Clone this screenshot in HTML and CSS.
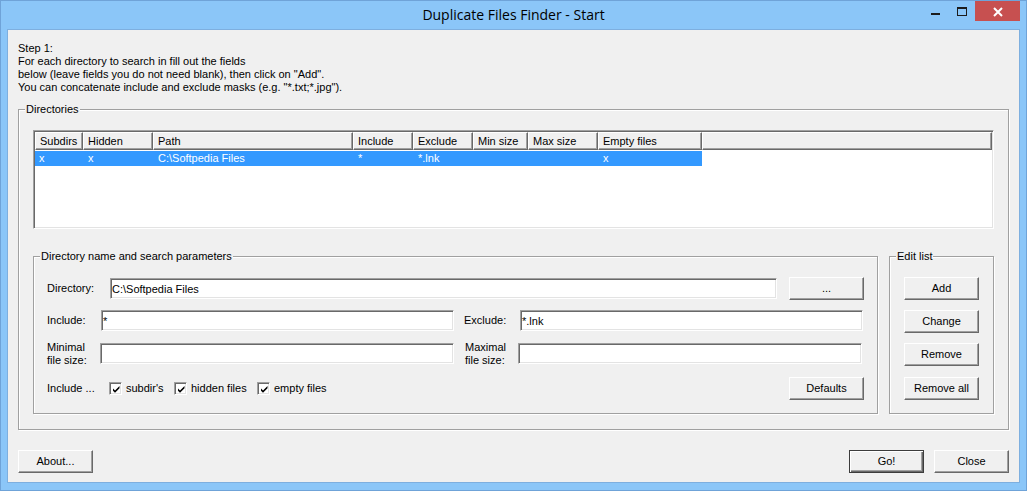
FILE: index.html
```html
<!DOCTYPE html>
<html>
<head>
<meta charset="utf-8">
<title>Duplicate Files Finder - Start</title>
<link rel="stylesheet" href="styles.css">
</head>
<body>
<div class="window">
  <div class="titlebar">
    <div class="tb-left"></div>
    <div class="title">Duplicate Files Finder - Start</div>
    <div class="caption-buttons">
      <span class="cap-btn cap-min"><svg width="27" height="20" viewBox="0 0 27 20"><rect x="9" y="12" width="9" height="2" fill="#1c1c1c"/></svg></span>
      <span class="cap-btn cap-max"><svg width="26" height="20" viewBox="0 0 26 20"><rect x="8" y="6" width="10" height="2" fill="#1c1c1c"/><rect x="8" y="6" width="1" height="9" fill="#1c1c1c"/><rect x="17" y="6" width="1" height="9" fill="#1c1c1c"/><rect x="8" y="14" width="10" height="1" fill="#1c1c1c"/></svg></span>
      <span class="cap-btn cap-close"><svg width="45" height="20" viewBox="0 0 45 20"><path d="M19 7 L27 15 M27 7 L19 15" stroke="#fff" stroke-width="2" fill="none"/></svg></span>
    </div>
  </div>
  <div class="client">
    <div class="intro">Step 1:<br>For each directory to search in fill out the fields<br>below (leave fields you do not need blank), then click on "Add".<br>You can concatenate include and exclude masks (e.g. "*.txt;*.jpg").</div>

    <fieldset class="group dirs">
      <legend>Directories</legend>
      <div class="listview">
        <div class="lv-header">
          <div class="hc w1">Subdirs</div>
          <div class="hc w2">Hidden</div>
          <div class="hc w3">Path</div>
          <div class="hc w4">Include</div>
          <div class="hc w5">Exclude</div>
          <div class="hc w6">Min size</div>
          <div class="hc w7">Max size</div>
          <div class="hc w8">Empty files</div>
          <div class="hc wfill"></div>
        </div>
        <div class="lv-row selected">
          <div class="cell w1 first">x</div>
          <div class="cell w2">x</div>
          <div class="cell w3">C:\Softpedia Files</div>
          <div class="cell w4">*</div>
          <div class="cell w5">*.lnk</div>
          <div class="cell w6"></div>
          <div class="cell w7"></div>
          <div class="cell w8">x</div>
        </div>
      </div>

      <div class="groups-row">
        <fieldset class="group params">
          <legend>Directory name and search parameters</legend>
          <div class="prow r1">
            <label class="lbl l-dir">Directory:</label>
            <input class="field f-dir" type="text" value="C:\Softpedia Files">
            <button class="btn b-browse">...</button>
          </div>
          <div class="prow r2">
            <label class="lbl l-inc">Include:</label>
            <input class="field f-inc" type="text" value="*">
            <label class="lbl l-exc">Exclude:</label>
            <input class="field f-exc" type="text" value="*.lnk">
          </div>
          <div class="prow r3">
            <label class="lbl l-min">Minimal<br>file size:</label>
            <input class="field f-min" type="text" value="">
            <label class="lbl l-max">Maximal<br>file size:</label>
            <input class="field f-max" type="text" value="">
          </div>
          <div class="prow r4">
            <span class="lbl l-incl">Include ...</span>
            <span class="chk c-sub"><span class="box"><svg width="9" height="9" viewBox="0 0 9 9"><path d="M1 3.5 L3 5.5 L7.5 1 L7.5 3.2 L3 7.7 L1 5.7 Z" fill="#000"/></svg></span><span class="chk-text">subdir's</span></span>
            <span class="chk c-hid"><span class="box"><svg width="9" height="9" viewBox="0 0 9 9"><path d="M1 3.5 L3 5.5 L7.5 1 L7.5 3.2 L3 7.7 L1 5.7 Z" fill="#000"/></svg></span><span class="chk-text">hidden files</span></span>
            <span class="chk c-emp"><span class="box"><svg width="9" height="9" viewBox="0 0 9 9"><path d="M1 3.5 L3 5.5 L7.5 1 L7.5 3.2 L3 7.7 L1 5.7 Z" fill="#000"/></svg></span><span class="chk-text">empty files</span></span>
            <button class="btn b-defaults">Defaults</button>
          </div>
        </fieldset>

        <fieldset class="group editlist">
          <legend>Edit list</legend>
          <button class="btn e-btn">Add</button>
          <button class="btn e-btn">Change</button>
          <button class="btn e-btn">Remove</button>
          <button class="btn e-btn e-last">Remove all</button>
        </fieldset>
      </div>
    </fieldset>

    <div class="bottom-bar">
      <button class="btn">About...</button>
      <div class="spacer"></div>
      <button class="btn default">Go!</button>
      <button class="btn">Close</button>
    </div>
  </div>
</div>
</body>
</html>
```

FILE: styles.css
```css
* { box-sizing: border-box; }

html, body {
  margin: 0;
  padding: 0;
}

body {
  width: 1027px;
  height: 491px;
  overflow: hidden;
  background: #8bc6f8;
  font-family: "Liberation Sans", Arial, sans-serif;
  font-size: 11px;
  color: #000;
}

.window {
  width: 1027px;
  height: 491px;
  border: 1px solid #6fa3d8;
  background: #8bc6f8;
  padding: 0 6px 7px 6px;
  display: flex;
  flex-direction: column;
}

/* ---------- title bar ---------- */
.titlebar {
  height: 28px;
  flex: none;
  display: grid;
  grid-template-columns: 1fr auto 1fr;
}

.title {
  font-family: "Open Sans", "Noto Sans", sans-serif;
  font-size: 14px;
  line-height: 20px;
  padding-top: 4px;
  color: #000;
  white-space: nowrap;
}

.caption-buttons {
  display: flex;
  justify-content: flex-end;
  align-items: flex-start;
}

.cap-btn {
  display: block;
  height: 20px;
}
.cap-btn svg { display: block; }
.cap-close { background: #c75050; }

/* ---------- client ---------- */
.client {
  flex: 1;
  border: 1px solid #7eafdf;
  background: #f0f0f0;
  display: flex;
  flex-direction: column;
}

.intro {
  padding: 12px 0 0 10px;
  line-height: 13px;
  white-space: nowrap;
}

/* ---------- group boxes ---------- */
.group {
  margin: 0;
  padding: 0;
  min-width: 0;
  border: 1px solid #a0a0a0;
  box-shadow: 1px 1px 0 #fff, inset 1px 1px 0 #fff;
}

.group > legend {
  margin-left: 6px;
  padding: 0 1px;
  line-height: 13px;
  font-size: 11px;
  background: #f0f0f0;
}

.dirs {
  margin: 9px 10px 0 10px;
}

/* ---------- list view ---------- */
.listview {
  margin: 14px 14px 0 14px;
  height: 99px;
  background: #fff;
  border: 1px solid;
  border-color: #a0a0a0 #fff #fff #a0a0a0;
  box-shadow: inset 1px 1px 0 #696969, inset -1px -1px 0 #e3e3e3;
  padding: 1px;
  overflow: hidden;
}

.lv-header {
  display: flex;
  height: 18px;
}

.hc {
  flex: none;
  height: 18px;
  background: #f0f0f0;
  border-top: 1px solid #fff;
  border-left: 1px solid #fff;
  border-right: 1px solid #696969;
  border-bottom: 1px solid #696969;
  box-shadow: inset -1px -1px 0 #a0a0a0;
  padding-left: 4px;
  line-height: 16px;
  white-space: nowrap;
  overflow: hidden;
}

.hc.wfill { flex: 1; }

.w1 { width: 48px; }
.w2 { width: 70px; }
.w3 { width: 200px; }
.w4 { width: 60px; }
.w5 { width: 60px; }
.w6 { width: 55px; }
.w7 { width: 70px; }
.w8 { width: 104px; }

.lv-row {
  display: flex;
  width: max-content;
  margin-top: 1px;
  height: 15px;
}

.lv-row.selected {
  background: #3399ff;
  color: #fff;
}

.cell {
  flex: none;
  line-height: 15px;
  padding-left: 5px;
  white-space: nowrap;
  overflow: hidden;
}
.cell.first { padding-left: 4px; }

/* ---------- lower groups ---------- */
.groups-row {
  display: flex;
  gap: 11px;
  margin: 21px 14px 15px 14px;
}

.params {
  width: 845px;
  padding: 14px 0 13px 0;
}

.editlist {
  width: 105px;
  padding: 14px 0 13px 0;
  display: flex;
  flex-direction: column;
  align-items: flex-start;
}

.prow {
  display: flex;
  align-items: center;
  margin-left: 13px;
  margin-right: 13px;
}

.r1 { height: 23px; }
.r2 { height: 23px; margin-top: 9px; }
.r3 { height: 27px; margin-top: 8px; }
.r4 { height: 23px; margin-top: 10px; }

.lbl {
  flex: none;
  line-height: 13px;
  white-space: nowrap;
}

.l-dir { width: 63px; }
.l-inc { width: 54px; }
.l-exc { width: 56px; margin-left: 10px; }
.l-min { width: 53px; }
.l-max { width: 53px; margin-left: 11px; }
.l-incl { width: 62px; }

.field {
  height: 21px;
  margin: 0;
  padding: 0 0 0 1px;
  font-family: "Liberation Sans", Arial, sans-serif;
  font-size: 11px;
  color: #000;
  background: #fff;
  border: 1px solid;
  border-color: #a0a0a0 #fff #fff #a0a0a0;
  box-shadow: inset 1px 1px 0 #696969, inset -1px -1px 0 #e3e3e3;
  outline: none;
}

.f-dir { flex: 1; min-width: 0; }
.f-inc { width: 353px; }
.f-exc { flex: 1; min-width: 0; margin-right: 1px; }
.f-min { width: 354px; }
.f-max { flex: 1; min-width: 0; margin-right: 2px; }

/* checkboxes */
.chk {
  display: flex;
  align-items: center;
  flex: none;
}
.c-sub { width: 65px; }
.c-hid { width: 83px; }
.c-emp { width: auto; }

.box {
  width: 13px;
  height: 13px;
  flex: none;
  background: #fff;
  border: 1px solid;
  border-color: #a0a0a0 #fff #fff #a0a0a0;
  box-shadow: inset 1px 1px 0 #696969, inset -1px -1px 0 #e3e3e3;
  display: flex;
  align-items: center;
  justify-content: center;
}
.box svg { display: block; margin: 1px 0 0 1px; }

.chk-text {
  margin-left: 4px;
  line-height: 13px;
}

/* ---------- buttons ---------- */
.btn {
  width: 75px;
  height: 23px;
  flex: none;
  margin: 0;
  padding: 0;
  font-family: "Liberation Sans", Arial, sans-serif;
  font-size: 11px;
  color: #000;
  background: #f0f0f0;
  border-style: solid;
  border-width: 1px;
  border-color: #fff #696969 #696969 #fff;
  box-shadow: inset -1px -1px 0 #a0a0a0;
  border-radius: 0;
  line-height: 19px;
  text-align: center;
}

.b-browse { margin-left: 12px; }
.b-defaults { margin-left: auto; }

.e-btn { margin-left: 14px; }
.e-btn + .e-btn { margin-top: 10px; }
.e-btn.e-last { margin-top: 11px; }

.btn.default {
  border: 1px solid #3c3c3c;
  box-shadow: inset 1px 1px 0 #fff, inset -1px -1px 0 #696969, inset -2px -2px 0 #a0a0a0;
}

.bottom-bar {
  display: flex;
  gap: 10px;
  margin-top: 20px;
  padding: 0 10px;
}

.bottom-bar .spacer { flex: 1; }
```
